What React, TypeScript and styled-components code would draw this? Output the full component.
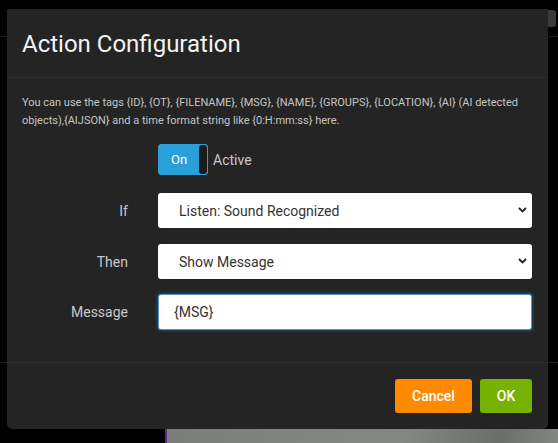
import React from "react";
import styled, { createGlobalStyle } from "styled-components";

const GlobalStyle = createGlobalStyle`
	html, body {
		margin: 0;
		padding: 0;
		background: #000;
		font-family: Roboto, "Liberation Sans", sans-serif;
	}
`;

const HINT =
	"You can use the tags {ID}, {OT}, {FILENAME}, {MSG}, {NAME}, {GROUPS}, {LOCATION}, {AI} (AI detected objects),{AIJSON} and a time format string like {0:H:mm:ss} here.";

const Page = styled.div`
	position: relative;
	width: 558px;
	height: 443px;
	overflow: hidden;
	background: #000;
`;

const BackLine = styled.div<{ $top: number }>`
	position: absolute;
	left: 0;
	right: 0;
	top: ${(p) => p.$top}px;
	height: 1px;
	background: #1e1e1e;
`;

const BackButton = styled.div`
	position: absolute;
	right: 2px;
	top: 10px;
	width: 10px;
	height: 17px;
	border-radius: 3px;
	background: #3a3a3a;
`;

const Backdrop = styled.div`
	position: absolute;
	left: 165px;
	right: 0;
	top: 429px;
	bottom: 0;
	background: linear-gradient(100deg, #7c7e7b 0%, #858782 60%, #6c6e6b 85%, #848682 100%);
	border-left: 2px solid #5b2a8c;
`;

const Dialog = styled.div`
	position: absolute;
	left: 7px;
	top: 9px;
	width: 541px;
	height: 420px;
	background: #242424;
	border-radius: 0 0 5px 5px;
	display: flex;
	flex-direction: column;
	color: #d0d0d0;
`;

const Header = styled.div`
	padding: 17px 15px 15px;
	height: 36px;
	border-bottom: 1px solid #2e2e2e;
`;

const Title = styled.h4`
	margin: 0;
	font-size: 24px;
	line-height: 36px;
	font-weight: 400;
	color: #f2f2f2;
`;

const Body = styled.div`
	flex: 1;
	padding: 16px 16px 0 15px;
	border-bottom: 1px solid #2e2e2e;
`;

const Hint = styled.p`
	margin: 0 0 14px;
	font-size: 11px;
	line-height: 18px;
	color: #c4c4c4;
`;

const Row = styled.div<{ $gap?: number }>`
	display: grid;
	grid-template-columns: 106px 1fr;
	column-gap: 30px;
	align-items: center;
	margin-bottom: ${(p) => p.$gap ?? 16}px;
`;

const Label = styled.label`
	text-align: right;
	font-size: 14px;
	color: #c8c8c8;
`;

const SwitchWrap = styled.div`
	display: flex;
	align-items: center;
	gap: 5px;
`;

const Switch = styled.div`
	display: flex;
	width: 50px;
	height: 31px;
	box-sizing: border-box;
	border: 1px solid #2a9fd8;
	border-radius: 3px;
	background: #2a9fd8;
	overflow: hidden;
`;

const SwitchOn = styled.span`
	flex: 1;
	display: flex;
	align-items: center;
	justify-content: center;
	color: #fff;
	font-size: 13px;
`;

const Knob = styled.span`
	width: 8px;
	background: #1a1a1a;
	border-radius: 3px;
`;

const SwitchText = styled.span`
	font-size: 14px;
	color: #c8c8c8;
`;

const Select = styled.div`
	position: relative;
	height: 35px;
	box-sizing: border-box;
	background: #fff;
	border-radius: 3px;
	display: flex;
	align-items: center;
	padding: 0 20px 0 21px;
	font-size: 14px;
	color: #333;
	svg {
		position: absolute;
		right: 5px;
		top: 14px;
	}
`;

const Input = styled.input`
	height: 36px;
	box-sizing: border-box;
	width: 100%;
	border: 1px solid #5a91b8;
	box-shadow: 0 0 0 2px #1b3a50;
	border-radius: 3px;
	padding: 0 15px;
	font-family: Roboto, "Liberation Sans", sans-serif;
	font-size: 14px;
	color: #333;
	outline: none;
`;

const Footer = styled.div`
	display: flex;
	justify-content: flex-end;
	gap: 8px;
	padding: 16px 16px 0;
	height: 50px;
`;

const Button = styled.button<{ $color: string; $w: number }>`
	width: ${(p) => p.$w}px;
	height: 34px;
	border: none;
	border-radius: 3px;
	background: ${(p) => p.$color};
	color: #fff;
	font-family: Roboto, "Liberation Sans", sans-serif;
	font-size: 14px;
	font-weight: 500;
`;

const Chevron = () => (
	<svg width="9" height="6" viewBox="0 0 9 6">
		<path d="M1 1l3.5 3.5L8 1" fill="none" stroke="#222" strokeWidth="1.8" />
	</svg>
);

export default function App() {
	return (
		<>
			<GlobalStyle />
			<Page>
				<BackLine $top={36} />
				<BackLine $top={362} />
				<BackButton />
				<Backdrop />
				<Dialog>
					<Header>
						<Title>Action Configuration</Title>
					</Header>
					<Body>
						<Hint>{HINT}</Hint>
						<Row $gap={18}>
							<span />
							<SwitchWrap>
								<Switch>
									<SwitchOn>On</SwitchOn>
									<Knob />
								</Switch>
								<SwitchText>Active</SwitchText>
							</SwitchWrap>
						</Row>
						<Row>
							<Label>If</Label>
							<Select>
								Listen: Sound Recognized
								<Chevron />
							</Select>
						</Row>
						<Row $gap={15}>
							<Label>Then</Label>
							<Select>
								Show Message
								<Chevron />
							</Select>
						</Row>
						<Row>
							<Label>Message</Label>
							<Input defaultValue="{MSG}" />
						</Row>
					</Body>
					<Footer>
						<Button $color="#ff8a00" $w={77}>
							Cancel
						</Button>
						<Button $color="#76b300" $w={52}>
							OK
						</Button>
					</Footer>
				</Dialog>
			</Page>
		</>
	);
}
